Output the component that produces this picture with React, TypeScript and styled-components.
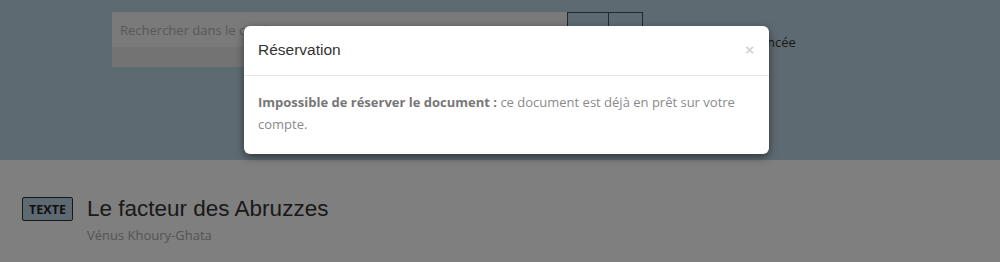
import React from 'react';
import styled, { createGlobalStyle } from 'styled-components';

const GlobalStyle = createGlobalStyle`
  html, body {
    margin: 0;
    padding: 0;
    background: #ffffff;
    font-family: "Open Sans", "Liberation Sans", Arial, sans-serif;
    font-size: 13px;
    color: #333;
  }
  * { box-sizing: border-box; }
`;

const Page = styled.div`
  width: 1000px;
  height: 262px;
  overflow: hidden;
  position: relative;
`;

const SearchBand = styled.header`
  height: 160px;
  background: #bdd5e5;
  padding: 12px 0 0 112px;
`;

const SearchRow = styled.div`
  display: flex;
  align-items: flex-start;
`;

const SearchColumn = styled.div`
  display: flex;
  flex-direction: column;
  width: 455px;
`;

const SearchInput = styled.div`
  height: 35px;
  background: #f5f5f5;
  color: #b0b0b0;
  padding: 0 8px;
  display: flex;
  align-items: center;
  font-size: 13px;
`;

const Suggest = styled.div`
  height: 20px;
  background: #e6e6e6;
`;

const ButtonGroup = styled.div`
  display: flex;
`;

const SquareButton = styled.div<{ $w: number }>`
  width: ${p => p.$w}px;
  height: 35px;
  border: 1px solid #3c5260;
  & + & { margin-left: -1px; }
`;

const AdvancedLink = styled.span`
  margin-left: 36px;
  line-height: 60px;
  color: #333;
  font-size: 13px;
`;

const Results = styled.section`
  padding: 36px 22px 0;
`;

const TitleRow = styled.div`
  display: flex;
  align-items: center;
  gap: 14px;
`;

const TypeBadge = styled.span`
  display: inline-flex;
  align-items: center;
  justify-content: center;
  width: 51px;
  height: 24px;
  background: #bdd5e5;
  border: 1px solid #333;
  border-radius: 2px;
  font-weight: 700;
  font-size: 12.5px;
  color: #222;
`;

const Title = styled.h2`
  margin: 0;
  font-family: "Liberation Sans", Arial, sans-serif;
  font-weight: 400;
  font-size: 22.5px;
  color: #333;
`;

const Author = styled.div`
  margin: 4px 0 0 65px;
  color: #a8a8a8;
  font-size: 13px;
`;

const Backdrop = styled.div`
  position: absolute;
  inset: 0;
  background: rgba(0, 0, 0, 0.5);
`;

const Modal = styled.div`
  position: absolute;
  left: 244px;
  top: 26px;
  width: 525px;
  background: #fff;
  border-radius: 6px;
  box-shadow: 0 3px 9px rgba(0, 0, 0, 0.5);
`;

const ModalHeader = styled.div`
  display: flex;
  justify-content: space-between;
  align-items: center;
  padding: 15px 14px 16px;
  border-bottom: 1px solid #e5e5e5;
`;

const ModalTitle = styled.h4`
  margin: 0;
  font-family: "Liberation Sans", Arial, sans-serif;
  font-weight: 400;
  font-size: 15.5px;
  line-height: 18px;
  color: #333;
`;

const Close = styled.span`
  font-family: "Liberation Sans", Arial, sans-serif;
  font-size: 15px;
  line-height: 18px;
  font-weight: 700;
  color: #d2d2d2;
  margin-right: 1px;
`;

const ModalBody = styled.div`
  padding: 15px 14px 19px;
  color: #8a8a8a;
  font-size: 13px;
  line-height: 22px;
  b { color: #777; font-weight: 700; }
`;

export default function App() {
  return (
    <Page>
      <GlobalStyle />
      <SearchBand>
        <SearchRow>
          <SearchColumn>
            <SearchInput>Rechercher dans le catalogue</SearchInput>
            <Suggest />
          </SearchColumn>
          <ButtonGroup>
            <SquareButton $w={42} />
            <SquareButton $w={35} />
          </ButtonGroup>
          <AdvancedLink>Recherche avancée</AdvancedLink>
        </SearchRow>
      </SearchBand>
      <Results>
        <TitleRow>
          <TypeBadge>TEXTE</TypeBadge>
          <Title>Le facteur des Abruzzes</Title>
        </TitleRow>
        <Author>Vénus Khoury-Ghata</Author>
      </Results>
      <Backdrop />
      <Modal>
        <ModalHeader>
          <ModalTitle>Réservation</ModalTitle>
          <Close>×</Close>
        </ModalHeader>
        <ModalBody>
          <b>Impossible de réserver le document :</b> ce document est déjà en prêt sur votre compte.
        </ModalBody>
      </Modal>
    </Page>
  );
}
